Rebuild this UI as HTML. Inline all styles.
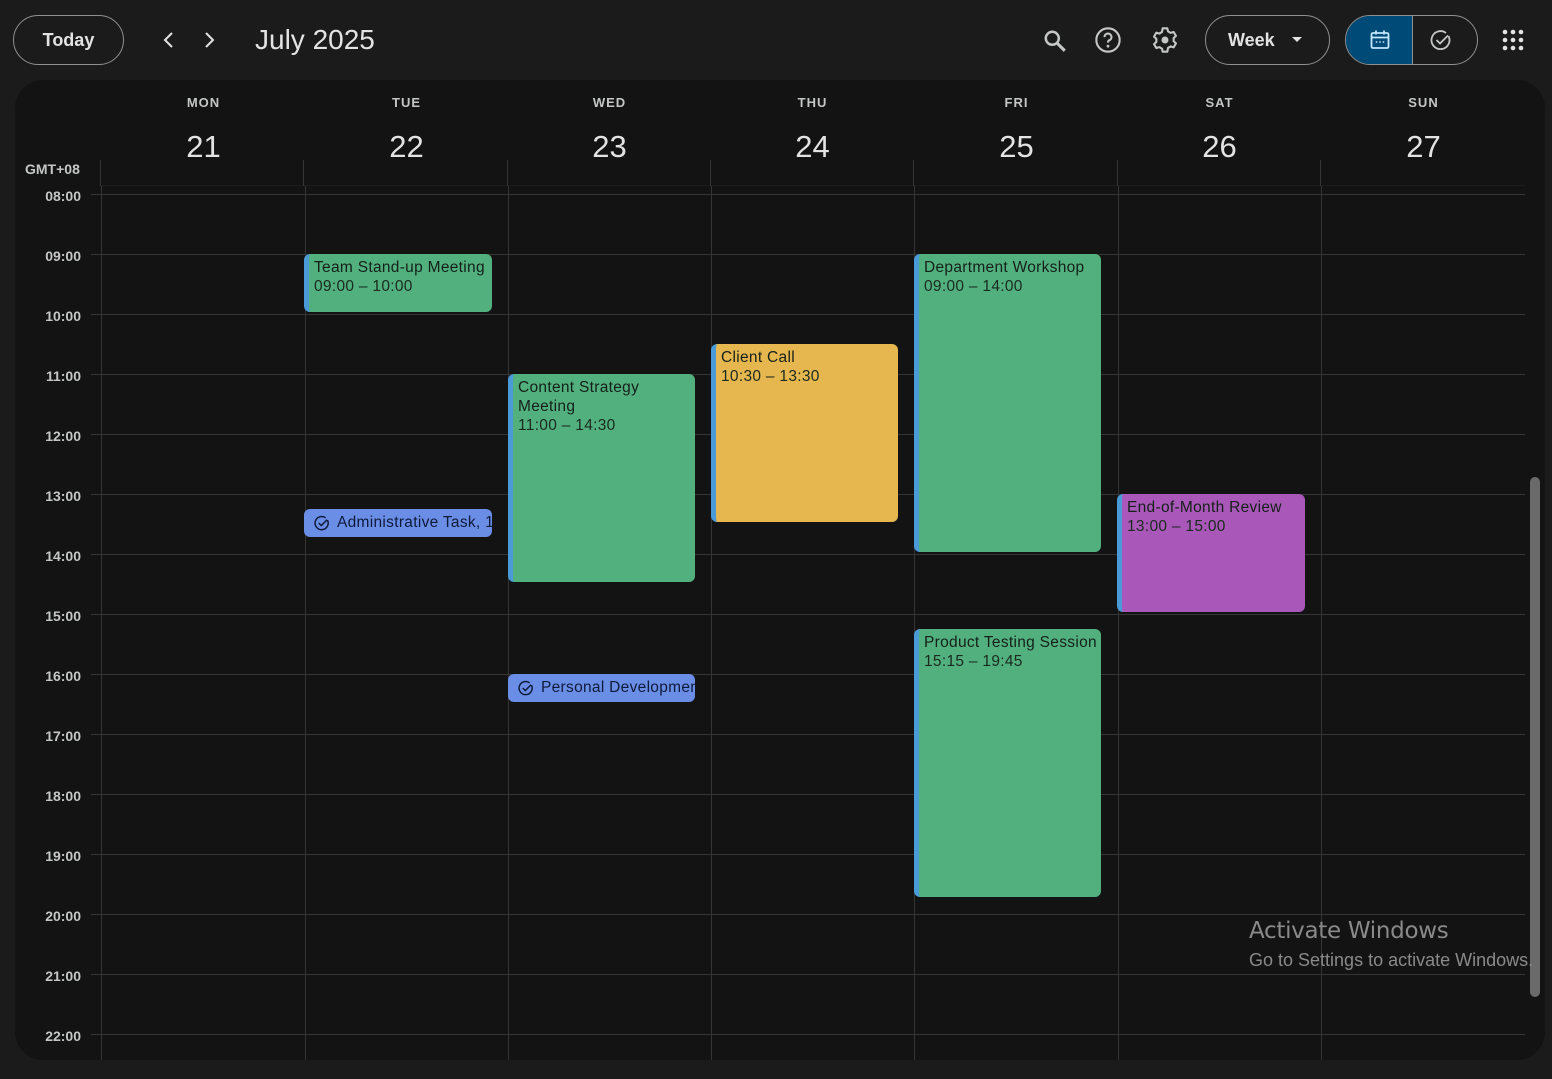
<!DOCTYPE html>
<html><head><meta charset="utf-8"><style>
*{box-sizing:border-box;margin:0;padding:0}
body{width:1552px;height:1079px;background:#1b1b1b;font-family:"Liberation Sans",sans-serif;color:#e3e3e3;position:relative;overflow:hidden}
.abs{position:absolute}
.btn{position:absolute;border:1px solid #8e918f;border-radius:25px;height:50px;top:15px;display:flex;align-items:center;justify-content:center;font-size:18px;font-weight:bold;color:#e3e3e3}
.panel{position:absolute;left:15px;top:80px;width:1530px;height:980px;background:#131313;border-radius:28px;overflow:hidden}
.dn{position:absolute;top:95px;width:203px;text-align:center;font-size:13px;font-weight:bold;letter-spacing:1px;color:#c4c7c5}
.dd{position:absolute;top:129px;width:203px;text-align:center;font-size:31px;color:#e3e3e3}
.hl{position:absolute;left:91px;width:1434px;height:1px;background:#353535}
.vl{position:absolute;width:1px;background:#353535}
.tl{position:absolute;left:10px;width:71px;text-align:right;font-size:14px;font-weight:bold;color:#c4c7c5}
.ev{position:absolute;border-radius:6px;border-left:5px solid #4a9ad8;padding:4px 0 0 5px;font-size:15.5px;letter-spacing:0.3px;line-height:19px;color:#1a2a1e;overflow:hidden;white-space:nowrap}
.ev b{font-weight:normal;color:#142018}
.tk{position:absolute;height:28px;border-radius:6px;background:#6a8de6;color:#0e1a3a;font-size:15.5px;letter-spacing:0.3px;display:flex;align-items:center;padding-left:10px;white-space:nowrap;overflow:hidden}
</style></head><body>
<div class="btn" style="left:13px;width:111px">Today</div>
<svg class="abs" style="left:160px;top:30px" width="18" height="20" viewBox="0 0 18 20"><path d="M12 3 5 10l7 7" fill="none" stroke="#e3e3e3" stroke-width="2"/></svg>
<svg class="abs" style="left:200px;top:30px" width="18" height="20" viewBox="0 0 18 20"><path d="M6 3l7 7-7 7" fill="none" stroke="#e3e3e3" stroke-width="2"/></svg>
<div class="abs" style="left:255px;top:24px;font-size:28px;color:#e3e3e3">July 2025</div>
<svg class="abs" style="left:1042px;top:28px" width="26" height="26" viewBox="0 0 24 24"><circle cx="9.5" cy="9.5" r="6" fill="none" stroke="#c4c7c5" stroke-width="2.3"/><path d="M14 14l7 7" stroke="#c4c7c5" stroke-width="2.8"/></svg>
<svg class="abs" style="left:1094px;top:26px" width="28" height="28" viewBox="0 0 24 24"><circle cx="12" cy="12" r="10" fill="none" stroke="#c4c7c5" stroke-width="1.8"/><path d="M9 9.5a3 3 0 1 1 4 2.8c-.8.4-1 1-1 2" fill="none" stroke="#c4c7c5" stroke-width="1.8"/><circle cx="12" cy="17.3" r="1.2" fill="#c4c7c5"/></svg>
<svg class="abs" style="left:1151px;top:26px" width="28" height="28" viewBox="0 0 24 24"><path d="M10 2h4l.6 2.6 2.2 1.3 2.6-.8 2 3.4-2 1.9v2.6l2 1.9-2 3.4-2.6-.8-2.2 1.3L14 22h-4l-.6-2.6-2.2-1.3-2.6.8-2-3.4 2-1.9V11L2.6 9.1l2-3.4 2.6.8 2.2-1.3z" fill="none" stroke="#c4c7c5" stroke-width="1.8" stroke-linejoin="round"/><circle cx="12" cy="12" r="3" fill="#c4c7c5"/></svg>
<div class="btn" style="left:1205px;width:125px;justify-content:flex-start;padding-left:22px">Week<svg style="margin-left:16px" width="12" height="8" viewBox="0 0 12 8"><path d="M1 1h10L6 6z" fill="#e3e3e3"/></svg></div>
<div class="abs" style="left:1345px;top:15px;width:133px;height:50px;border:1px solid #8e918f;border-radius:25px;overflow:hidden">
<div class="abs" style="left:0;top:0;width:66px;height:50px;background:#004a77"></div>
<div class="abs" style="left:66px;top:0;width:1px;height:50px;background:#8e918f"></div>
<svg class="abs" style="left:23px;top:13px" width="22" height="22" viewBox="0 0 22 22"><rect x="2.5" y="4" width="17" height="15" rx="1.5" fill="none" stroke="#c2e7ff" stroke-width="1.8"/><path d="M2.5 8.5h17M7 1.5v4M15 1.5v4" stroke="#c2e7ff" stroke-width="1.8"/><circle cx="7.5" cy="13" r=".9" fill="#c2e7ff"/><circle cx="11" cy="13" r=".9" fill="#c2e7ff"/><circle cx="14.5" cy="13" r=".9" fill="#c2e7ff"/></svg>
<svg class="abs" style="left:84px;top:13px" width="22" height="22" viewBox="0 0 22 22"><path d="M18.5 7A9 9 0 1 1 16 4" fill="none" stroke="#c4c7c5" stroke-width="1.8"/><path d="M6.5 11l3.5 3.5 8-8" fill="none" stroke="#c4c7c5" stroke-width="1.8"/></svg>
</div>
<svg class="abs" style="left:1502px;top:29px" width="22" height="22" viewBox="0 0 22 22"><g fill="#e3e3e3"><circle cx="3" cy="3" r="2.3"/><circle cx="11" cy="3" r="2.3"/><circle cx="19" cy="3" r="2.3"/><circle cx="3" cy="11" r="2.3"/><circle cx="11" cy="11" r="2.3"/><circle cx="19" cy="11" r="2.3"/><circle cx="3" cy="19" r="2.3"/><circle cx="11" cy="19" r="2.3"/><circle cx="19" cy="19" r="2.3"/></g></svg>

<div class="panel"></div>
<div class="dn" style="left:102px">MON</div><div class="dd" style="left:102px">21</div>
<div class="dn" style="left:305px">TUE</div><div class="dd" style="left:305px">22</div>
<div class="dn" style="left:508px">WED</div><div class="dd" style="left:508px">23</div>
<div class="dn" style="left:711px">THU</div><div class="dd" style="left:711px">24</div>
<div class="dn" style="left:915px">FRI</div><div class="dd" style="left:915px">25</div>
<div class="dn" style="left:1118px">SAT</div><div class="dd" style="left:1118px">26</div>
<div class="dn" style="left:1322px">SUN</div><div class="dd" style="left:1322px">27</div>
<div class="abs" style="left:25px;top:161px;font-size:14px;font-weight:bold;color:#c4c7c5">GMT+08</div>
<div class="abs" style="left:100px;top:185px;width:1425px;height:1px;background:#1c1c1c"></div>

<div class="vl" style="left:100px;top:160px;height:26px"></div>
<div class="vl" style="left:303px;top:160px;height:26px"></div>
<div class="vl" style="left:507px;top:160px;height:26px"></div>
<div class="vl" style="left:710px;top:160px;height:26px"></div>
<div class="vl" style="left:913px;top:160px;height:26px"></div>
<div class="vl" style="left:1117px;top:160px;height:26px"></div>
<div class="vl" style="left:1320px;top:160px;height:26px"></div>

<div class="vl" style="left:101px;top:186px;height:874px"></div>
<div class="vl" style="left:305px;top:186px;height:874px"></div>
<div class="vl" style="left:508px;top:186px;height:874px"></div>
<div class="vl" style="left:711px;top:186px;height:874px"></div>
<div class="vl" style="left:914px;top:186px;height:874px"></div>
<div class="vl" style="left:1118px;top:186px;height:874px"></div>
<div class="vl" style="left:1321px;top:186px;height:874px"></div>

<div class="hl" style="top:194px"></div><div class="tl" style="top:188px">08:00</div>
<div class="hl" style="top:254px"></div><div class="tl" style="top:248px">09:00</div>
<div class="hl" style="top:314px"></div><div class="tl" style="top:308px">10:00</div>
<div class="hl" style="top:374px"></div><div class="tl" style="top:368px">11:00</div>
<div class="hl" style="top:434px"></div><div class="tl" style="top:428px">12:00</div>
<div class="hl" style="top:494px"></div><div class="tl" style="top:488px">13:00</div>
<div class="hl" style="top:554px"></div><div class="tl" style="top:548px">14:00</div>
<div class="hl" style="top:614px"></div><div class="tl" style="top:608px">15:00</div>
<div class="hl" style="top:674px"></div><div class="tl" style="top:668px">16:00</div>
<div class="hl" style="top:734px"></div><div class="tl" style="top:728px">17:00</div>
<div class="hl" style="top:794px"></div><div class="tl" style="top:788px">18:00</div>
<div class="hl" style="top:854px"></div><div class="tl" style="top:848px">19:00</div>
<div class="hl" style="top:914px"></div><div class="tl" style="top:908px">20:00</div>
<div class="hl" style="top:974px"></div><div class="tl" style="top:968px">21:00</div>
<div class="hl" style="top:1034px"></div><div class="tl" style="top:1028px">22:00</div>

<div class="ev" style="left:304px;top:254px;width:188px;height:58px;background:#52b07f"><b>Team Stand-up Meeting</b><br>09:00 – 10:00</div>
<div class="ev" style="left:508px;top:374px;width:187px;height:208px;background:#52b07f"><b>Content Strategy<br>Meeting</b><br>11:00 – 14:30</div>
<div class="ev" style="left:711px;top:344px;width:187px;height:178px;background:#e6b74f;border-left-color:#4a9ad8"><b>Client Call</b><br>10:30 – 13:30</div>
<div class="ev" style="left:914px;top:254px;width:187px;height:298px;background:#52b07f"><b>Department Workshop</b><br>09:00 – 14:00</div>
<div class="ev" style="left:1117px;top:494px;width:188px;height:118px;background:#a957b9"><b>End-of-Month Review</b><br>13:00 – 15:00</div>
<div class="ev" style="left:914px;top:629px;width:187px;height:268px;background:#52b07f"><b>Product Testing Session</b><br>15:15 – 19:45</div>

<div class="tk" style="left:304px;top:509px;width:188px"><svg width="16" height="16" viewBox="0 0 22 22" style="margin-right:7px;flex:none"><path d="M18.5 7A9 9 0 1 1 16 4" fill="none" stroke="#0e1a3a" stroke-width="2"/><path d="M6.5 11l3.5 3.5 8-8" fill="none" stroke="#0e1a3a" stroke-width="2"/></svg>Administrative Task, 1</div>
<div class="tk" style="left:508px;top:674px;width:187px"><svg width="16" height="16" viewBox="0 0 22 22" style="margin-right:7px;flex:none"><path d="M18.5 7A9 9 0 1 1 16 4" fill="none" stroke="#0e1a3a" stroke-width="2"/><path d="M6.5 11l3.5 3.5 8-8" fill="none" stroke="#0e1a3a" stroke-width="2"/></svg>Personal Development</div>

<div class="abs" style="left:1530px;top:477px;width:10px;height:520px;border-radius:5px;background:#6a6a6a"></div>
<div class="abs" style="left:1249px;top:918px;font-size:23px;color:#8a8a8a;font-family:'DejaVu Sans','Liberation Sans',sans-serif;letter-spacing:-0.3px">Activate Windows</div>
<div class="abs" style="left:1249px;top:950px;font-size:18px;color:#8a8a8a;font-family:'Liberation Sans',sans-serif">Go to Settings to activate Windows.</div>
</body></html>
